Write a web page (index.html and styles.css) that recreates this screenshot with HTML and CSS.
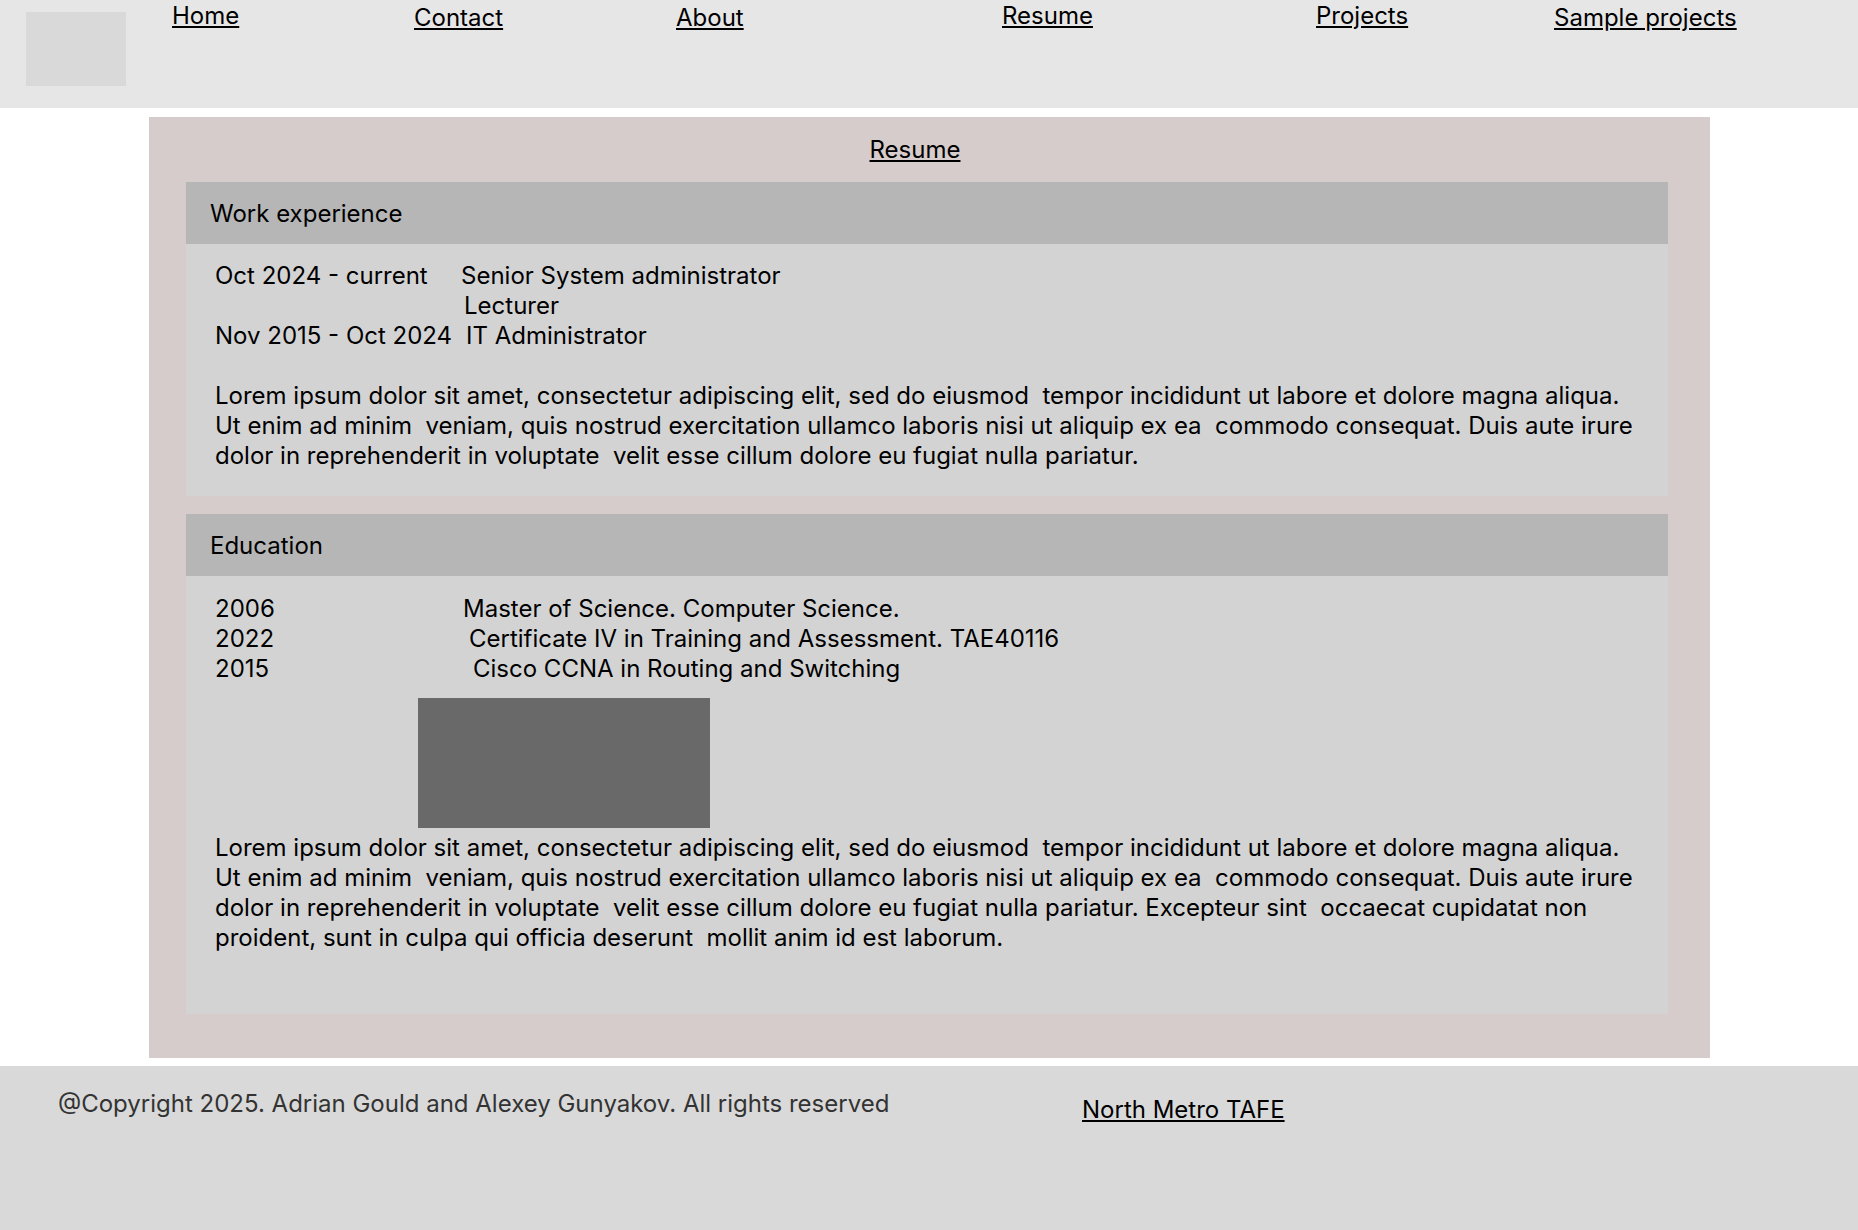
FILE: index.html
```html
<!DOCTYPE html>
<html lang="en">
<head>
<meta charset="utf-8">
<title>Resume</title>
<link rel="stylesheet" href="styles.css">
</head>
<body>
<header class="site-header">
  <div class="logo"></div>
  <nav class="nav">
    <a class="nav-link" href="#">Home</a>
    <a class="nav-link nav-low" href="#">Contact</a>
    <a class="nav-link nav-low" href="#">About</a>
    <a class="nav-link" href="#">Resume</a>
    <a class="nav-link" href="#">Projects</a>
    <a class="nav-link nav-low" href="#">Sample projects</a>
  </nav>
</header>

<main class="page">
  <div class="page-title"><a href="#">Resume</a></div>

  <section class="card">
    <h2 class="card-head">Work experience</h2>
    <div class="card-body card-body-work">
      <div class="rows">
        <div class="row-label">Oct 2024 - current</div>
        <div class="row-value">Senior System administrator</div>
        <div class="row-label"></div>
        <div class="row-value shift-3">Lecturer</div>
        <div class="row-label">Nov 2015 - Oct 2024</div>
        <div class="row-value shift-5">IT Administrator</div>
      </div>
      <p class="para para-gap">Lorem ipsum dolor sit amet, consectetur adipiscing elit, sed do eiusmod&nbsp; tempor incididunt ut labore et dolore magna aliqua.<br>Ut enim ad minim&nbsp; veniam, quis nostrud exercitation ullamco laboris nisi ut aliquip ex ea&nbsp; commodo consequat. Duis aute irure<br>dolor in reprehenderit in voluptate&nbsp; velit esse cillum dolore eu fugiat nulla pariatur.</p>
    </div>
  </section>

  <section class="card">
    <h2 class="card-head card-head-edu">Education</h2>
    <div class="card-body card-body-edu">
      <div class="rows">
        <div class="row-label">2006</div>
        <div class="row-value shift-2">Master of Science. Computer Science.</div>
        <div class="row-label">2022</div>
        <div class="row-value shift-8">Certificate IV in Training and Assessment. TAE40116</div>
        <div class="row-label">2015</div>
        <div class="row-value shift-12">Cisco CCNA in Routing and Switching</div>
      </div>
      <div class="photo"></div>
      <p class="para">Lorem ipsum dolor sit amet, consectetur adipiscing elit, sed do eiusmod&nbsp; tempor incididunt ut labore et dolore magna aliqua.<br>Ut enim ad minim&nbsp; veniam, quis nostrud exercitation ullamco laboris nisi ut aliquip ex ea&nbsp; commodo consequat. Duis aute irure<br>dolor in reprehenderit in voluptate&nbsp; velit esse cillum dolore eu fugiat nulla pariatur. Excepteur sint&nbsp; occaecat cupidatat non<br>proident, sunt in culpa qui officia deserunt&nbsp; mollit anim id est laborum.</p>
    </div>
  </section>
</main>

<footer class="site-footer">
  <div class="copyright">@Copyright 2025. Adrian Gould and Alexey Gunyakov. All rights reserved</div>
  <a class="footer-link" href="#">North Metro TAFE</a>
</footer>
</body>
</html>
```

FILE: styles.css
```css
* {
  box-sizing: border-box;
}

html, body {
  margin: 0;
  padding: 0;
}

body {
  font-family: Inter, "Liberation Sans", sans-serif;
  font-size: 24px;
  line-height: 30px;
  color: #000;
  background: #fff;
}

a {
  color: #000;
  text-decoration: underline;
}

/* Header */
.site-header {
  height: 108px;
  background: #e6e6e6;
  display: flex;
  align-items: flex-start;
}

.logo {
  width: 100px;
  height: 74px;
  margin: 12px 0 0 26px;
  background: #d9d9d9;
}

.nav {
  display: grid;
  grid-template-columns: 242px 262px 326px 314px 238px auto;
  margin-left: 46px;
  padding-top: 1px;
  align-items: start;
}

.nav-link {
  justify-self: start;
}

.nav-low {
  margin-top: 2px;
}

/* Main */
.page {
  width: 1561px;
  margin: 9px 0 0 149px;
  padding: 18px 42px 44px 37px;
  background: #d5cccb;
}

.page-title {
  text-align: center;
  padding-right: 24px;
  margin-bottom: 17px;
}

.card {
  background: #d3d3d3;
}

.card + .card {
  margin-top: 18px;
}

.card-head {
  margin: 0;
  height: 62px;
  padding: 17px 0 0 24px;
  background: #b6b6b6;
  font-size: 24px;
  font-weight: 400;
  line-height: 30px;
}

.card-head-edu {
  padding-top: 17px;
}

.card-body {
  padding: 17px 20px 25px 29px;
}

.card-body-edu {
  padding-top: 18px;
  padding-bottom: 61px;
}

.rows {
  display: grid;
  grid-template-columns: 246px auto;
}

.shift-2 { padding-left: 2px; }
.shift-3 { padding-left: 3px; }
.shift-5 { padding-left: 5px; }
.shift-8 { padding-left: 8px; }
.shift-12 { padding-left: 12px; }

.para {
  margin: 0;
}

.para-gap {
  margin-top: 30px;
}

.photo {
  width: 292px;
  height: 130px;
  margin: 14px 0 5px 203px;
  background: #696969;
}

/* Footer */
.site-footer {
  margin-top: 8px;
  height: 164px;
  background: #d9d9d9;
  display: grid;
  grid-template-columns: 1024px auto;
  align-items: start;
  padding: 23px 0 0 58px;
}

.copyright {
  color: #333;
}

.footer-link {
  justify-self: start;
  margin-top: 6px;
}
```
